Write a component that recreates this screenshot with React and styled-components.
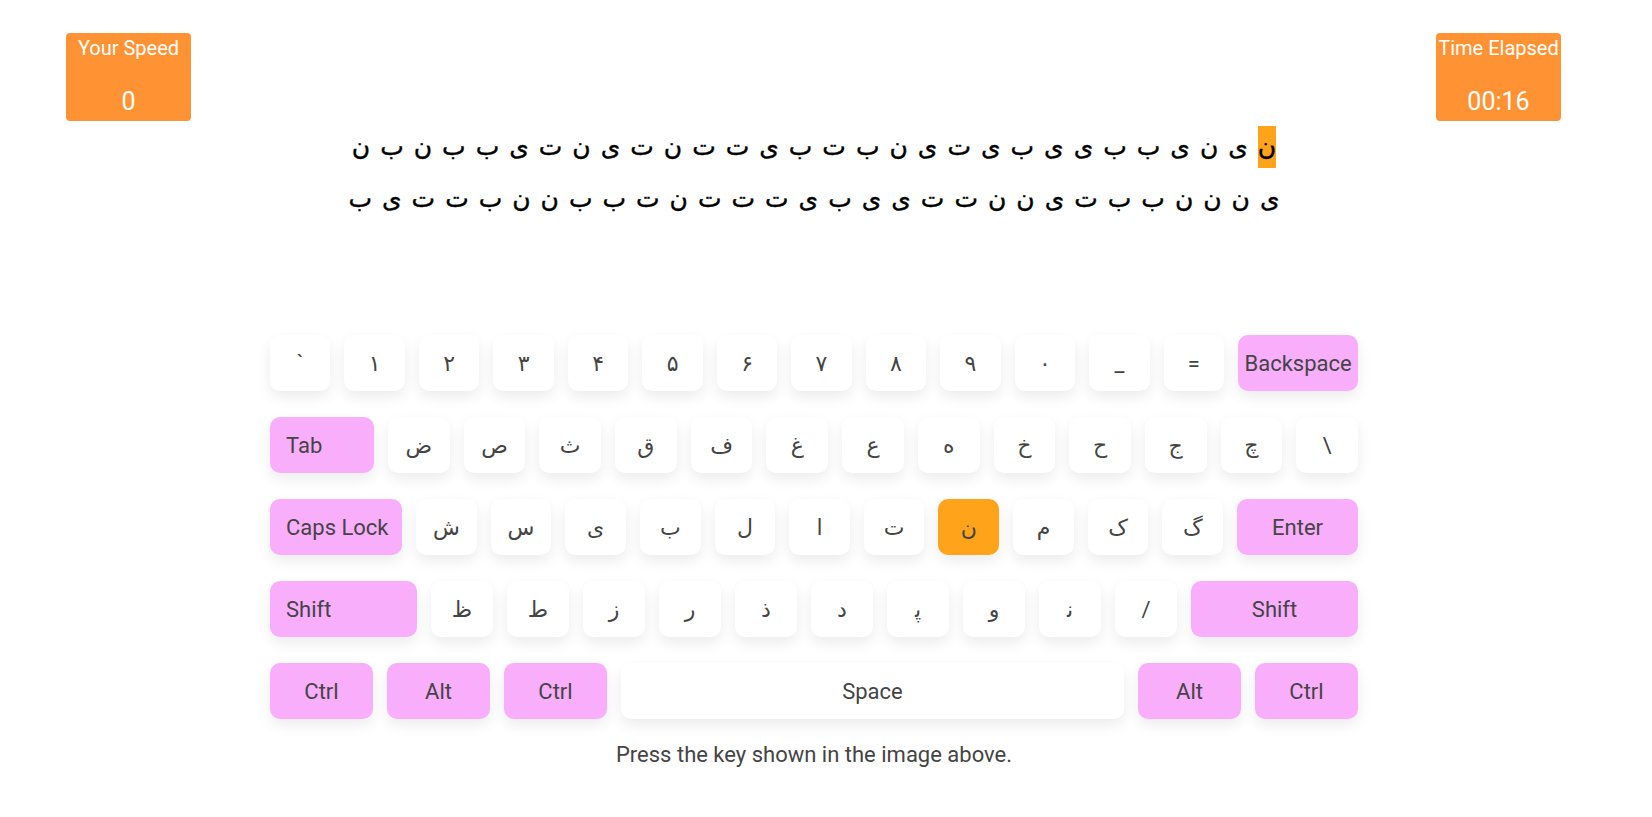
import React from "react";
import styled, { createGlobalStyle } from "styled-components";

const GlobalStyle = createGlobalStyle`
  body {
    margin: 0;
    background: #fff;
    font-family: Roboto, "DejaVu Sans", sans-serif;
  }
`;

const lineOne = "ن ی ن ی ب ب ی ی ب ی ت ی ن ب ت ب ی ت ت ن ت ی ن ت ی ب ب ن ب ن".split(" ");
const lineTwo = "ی ن ن ن ب ب ت ی ن ن ت ت ی ی ب ی ت ت ت ن ت ب ب ن ن ب ت ت ی ب".split(" ");

const rows = [
  [
    ..."` ۱ ۲ ۳ ۴ ۵ ۶ ۷ ۸ ۹ ۰ _ =".split(" ").map((k) => ({ label: k })),
    { label: "Backspace", width: 120, special: true },
  ],
  [
    { label: "Tab", width: 104, special: true, left: true },
    ..."ض ص ث ق ف غ ع ه خ ح ج چ \\".split(" ").map((k) => ({ label: k })),
  ],
  [
    { label: "Caps Lock", width: 132, special: true, left: true },
    ..."ش س ی ب ل ا ت ن م ک گ".split(" ").map((k) => ({ label: k, active: k === "ن" })),
    { label: "Enter", width: 121, special: true },
  ],
  [
    { label: "Shift", width: 147, special: true, left: true },
    ..."ظ ط ز ر ذ د ﭘ و ﻧ /".split(" ").map((k) => ({ label: k })),
    { label: "Shift", width: 167, special: true },
  ],
  [
    { label: "Ctrl", width: 103, special: true },
    { label: "Alt", width: 103, special: true },
    { label: "Ctrl", width: 103, special: true },
    { label: "Space", grow: true },
    { label: "Alt", width: 103, special: true },
    { label: "Ctrl", width: 103, special: true },
  ],
];

const Page = styled.div`
  width: 1628px;
`;

const Header = styled.header`
  display: flex;
  justify-content: space-between;
  padding: 33px 67px 0 66px;
`;

const StatBox = styled.div`
  width: 125px;
  height: 88px;
  box-sizing: border-box;
  padding: 3px 0 5px;
  display: flex;
  flex-direction: column;
  justify-content: space-between;
  align-items: center;
  background: #ff9233;
  border-radius: 4px;
  color: #fff;
  white-space: nowrap;
`;

const StatLabel = styled.div`
  font-size: 20px;
`;

const StatValue = styled.div`
  font-size: 25px;
`;

const Prompt = styled.div`
  margin-top: 5px;
  display: flex;
  flex-direction: column;
  gap: 10px;
  color: #000;
`;

const PromptRow = styled.div`
  direction: rtl;
  display: flex;
  justify-content: center;
  gap: 10px;
  font-size: 25px;
  -webkit-text-stroke: 0.4px #000;
`;

const Letter = styled.span`
  display: inline-block;
  line-height: 42px;
  height: 42px;
  background: ${(p) => (p.$current ? "#ffa31a" : "transparent")};
`;

const Keyboard = styled.div`
  width: 1088px;
  margin: 115px auto 0;
  display: flex;
  flex-direction: column;
  gap: 26px;
`;

const Row = styled.div`
  display: flex;
  gap: 14px;
`;

const Key = styled.div`
  height: 56px;
  box-sizing: border-box;
  flex: ${(p) => (p.$width ? `0 0 ${p.$width}px` : "1 1 0")};
  display: flex;
  align-items: center;
  justify-content: ${(p) => (p.$left ? "flex-start" : "center")};
  padding-left: ${(p) => (p.$left ? "16px" : "0")};
  border-radius: 10px;
  background: ${(p) => (p.$active ? "#ffa31a" : p.$special ? "#f9aefc" : "#fff")};
  box-shadow: 0 6px 14px rgba(0, 0, 0, 0.08);
  color: #444;
  font-size: 22px;
  white-space: nowrap;
`;

const Hint = styled.p`
  margin: 23px 0 0;
  text-align: center;
  font-size: 22px;
  color: #444;
`;

function PromptLine({ letters, first }) {
  return (
    <PromptRow>
      {letters.map((ch, i) => (
        <Letter key={i} $current={first && i === 0}>
          {ch}
        </Letter>
      ))}
    </PromptRow>
  );
}

export default function App() {
  return (
    <Page>
      <GlobalStyle />
      <Header>
        <StatBox>
          <StatLabel>Your Speed</StatLabel>
          <StatValue>0</StatValue>
        </StatBox>
        <StatBox>
          <StatLabel>Time Elapsed</StatLabel>
          <StatValue>00:16</StatValue>
        </StatBox>
      </Header>
      <Prompt>
        <PromptLine letters={lineOne} first />
        <PromptLine letters={lineTwo} />
      </Prompt>
      <Keyboard>
        {rows.map((row, r) => (
          <Row key={r}>
            {row.map((k, i) => (
              <Key
                key={i}
                $width={k.width}
                $special={k.special}
                $left={k.left}
                $active={k.active}
              >
                {k.label}
              </Key>
            ))}
          </Row>
        ))}
      </Keyboard>
      <Hint>Press the key shown in the image above.</Hint>
    </Page>
  );
}
